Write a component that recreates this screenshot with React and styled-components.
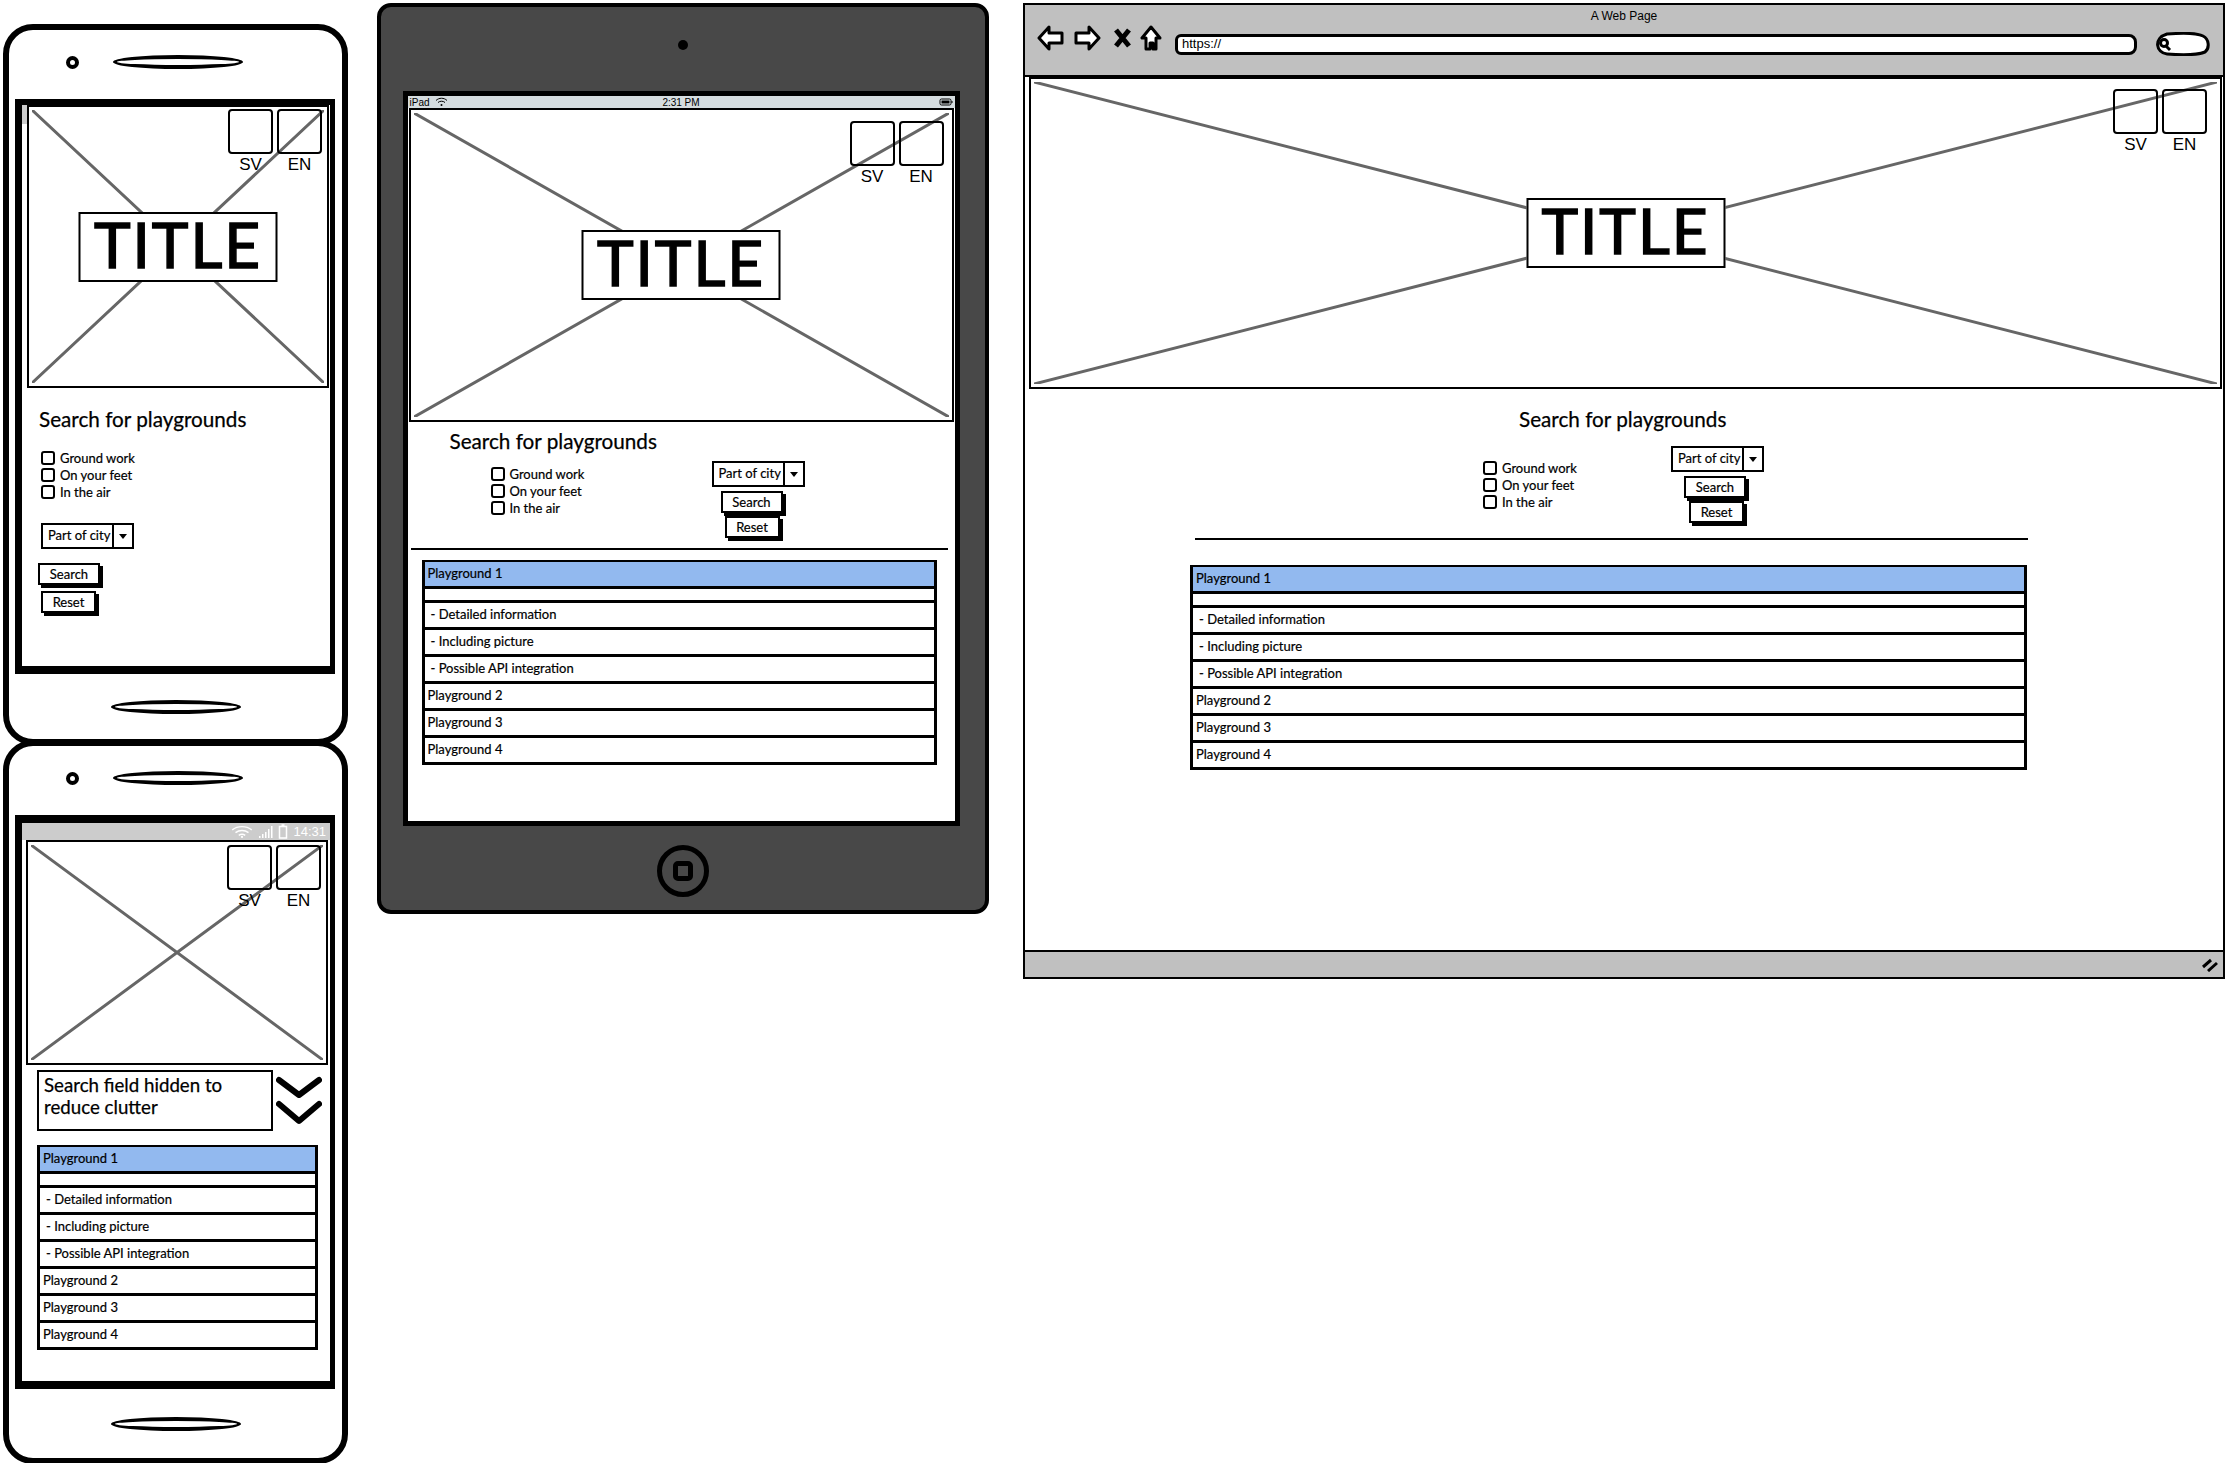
import React from 'react';
import styled, { createGlobalStyle } from 'styled-components';

const GlobalStyle = createGlobalStyle`
  html, body {
    margin: 0;
    padding: 0;
    background: #fff;
    color: #000;
    font-family: Lato, "Noto Sans", sans-serif;
  }
`;

const Page = styled.div`
  display: flex;
  align-items: flex-start;
  width: 2225px;
  height: 1463px;
  overflow: hidden;
`;

const PhoneColumn = styled.div`
  display: flex;
  flex-direction: column;
  width: 345px;
  margin: 24px 0 0 3px;
`;

const Phone = styled.div`
  display: flex;
  flex-direction: column;
  box-sizing: border-box;
  height: ${(p) => p.$height}px;
  margin-top: ${(p) => p.$top || 0}px;
  border: 6px solid #000;
  border-radius: 30px;
  background: #fff;
`;

const PhoneHead = styled.div`
  display: flex;
  align-items: center;
  gap: 34px;
  height: 69px;
  padding: 0 0 5px 57px;
  box-sizing: border-box;
`;

const Camera = styled.div`
  width: 5px;
  height: 5px;
  border: 4px solid #000;
  border-radius: 50%;
`;

const Speaker = styled.div`
  box-sizing: border-box;
  width: 130px;
  height: 14px;
  border: 4px solid #000;
  border-radius: 50%;
`;

const PhoneFoot = styled.div`
  flex: 1;
  display: flex;
  align-items: center;
  justify-content: center;
`;

const PhoneScreen = styled.div`
  box-sizing: border-box;
  width: 320px;
  height: ${(p) => p.$height}px;
  margin-left: 6px;
  border: solid #000;
  border-width: ${(p) => p.$top}px 5px 8px 7px;
  background: ${(p) => (p.$stub ? 'linear-gradient(#ccc, #ccc) no-repeat 0 0 / 5px 19px' : '#fff')};
`;

const AndroidBar = styled.div`
  display: flex;
  align-items: center;
  justify-content: flex-end;
  gap: 5px;
  height: 17px;
  padding-right: 4px;
  background: #ccc;
  color: #fff;
  font: 13px "Liberation Sans", Arial, sans-serif;
`;

const Tablet = styled.div`
  display: flex;
  flex-direction: column;
  align-items: center;
  flex: none;
  box-sizing: border-box;
  width: 612px;
  height: 911px;
  margin: 3px 0 0 29px;
  border: 4px solid #000;
  border-radius: 14px;
  background: #484848;
`;

const TabletHead = styled.div`
  display: flex;
  justify-content: center;
  align-items: center;
  box-sizing: border-box;
  height: 84px;
  padding-bottom: 8px;
`;

const TabletCamera = styled.div`
  width: 10px;
  height: 10px;
  border-radius: 50%;
  background: #000;
`;

const TabletScreen = styled.div`
  box-sizing: border-box;
  width: 557px;
  height: 735px;
  margin-right: 4px;
  border: 5px solid #000;
  background: #fff;
`;

const IpadBar = styled.div`
  display: grid;
  grid-template-columns: 1fr auto 1fr;
  align-items: center;
  height: 12px;
  padding: 0 2px;
  background: #d5dcdf;
  font: 10px "Liberation Sans", Arial, sans-serif;
`;

const IpadLeft = styled.div`
  display: flex;
  align-items: center;
  gap: 5px;
`;

const IpadRight = styled.div`
  display: flex;
  justify-content: flex-end;
`;

const TabletFoot = styled.div`
  flex: 1;
  display: flex;
  align-items: center;
  justify-content: center;
  padding-top: 6px;
`;

const HomeButton = styled.div`
  display: flex;
  align-items: center;
  justify-content: center;
  box-sizing: border-box;
  width: 52px;
  height: 52px;
  border: 5px solid #000;
  border-radius: 50%;
`;

const HomeSquare = styled.div`
  box-sizing: border-box;
  width: 20px;
  height: 20px;
  border: 5px solid #000;
  border-radius: 5px;
`;

const Browser = styled.div`
  display: flex;
  flex-direction: column;
  flex: none;
  box-sizing: border-box;
  width: 1202px;
  height: 976px;
  margin: 3px 0 0 34px;
  border: 2px solid #000;
  background: #fff;
`;

const BrowserBar = styled.div`
  height: 70px;
  border-bottom: 2px solid #000;
  background: #c0c0c0;
`;

const BrowserTitle = styled.div`
  padding-top: 3px;
  height: 16px;
  text-align: center;
  font: 12px/16px "Liberation Sans", Arial, sans-serif;
`;

const NavRow = styled.div`
  display: flex;
  align-items: center;
  height: 26px;
  margin-top: 7px;
  padding-left: 12px;
`;

const NavIcon = styled.svg`
  flex: none;
  margin-left: ${(p) => p.$gap || 0}px;
  margin-bottom: ${(p) => p.$lift || 0}px;
`;

const UrlBar = styled.div`
  box-sizing: border-box;
  width: 962px;
  height: 21px;
  margin-left: 13px;
  padding-left: 4px;
  border: 3px solid #000;
  border-radius: 6px 8px 8px 6px;
  background: #fff;
  font: 13px/13px "Liberation Sans", Arial, sans-serif;
`;

const BrowserContent = styled.div`
  flex: 1;
  padding-left: 4px;
`;

const BrowserFoot = styled.div`
  display: flex;
  align-items: center;
  justify-content: flex-end;
  height: 25px;
  padding-right: 5px;
  border-top: 2px solid #000;
  background: #c0c0c0;
`;

const Hero = styled.div`
  position: relative;
  box-sizing: border-box;
  width: ${(p) => p.$width}px;
  height: ${(p) => p.$height}px;
  margin-left: ${(p) => p.$left || 0}px;
  border: 2px solid #000;
`;

const Cross = styled.svg`
  position: absolute;
  top: 3px;
  left: 3px;
  width: calc(100% - 6px);
  height: calc(100% - 6px);
`;

const TitleBox = styled.div`
  position: absolute;
  top: 50%;
  left: 50%;
  transform: translate(-50%, -50%);
  box-sizing: border-box;
  width: 199px;
  height: 70px;
  border: 2px solid #000;
  background: #fff;
  text-align: center;
  font-size: 62px;
  line-height: 60px;
  letter-spacing: 2px;
  -webkit-text-stroke: 1.5px #000;
`;

const LangGroup = styled.div`
  position: absolute;
  top: ${(p) => p.$top}px;
  right: ${(p) => p.$right}px;
  display: flex;
  gap: 4px;
`;

const LangItem = styled.div`
  width: 45px;
  text-align: center;
  font: 17px/22px "Liberation Sans", Arial, sans-serif;
`;

const LangBox = styled.div`
  box-sizing: border-box;
  height: 45px;
  border: 2px solid #000;
  border-radius: 4px;
`;

const Heading = styled.div`
  height: 22px;
  margin: ${(p) => p.$top}px 0 0 ${(p) => p.$left}px;
  font-size: 20.7px;
  line-height: 22px;
  -webkit-text-stroke: 0.25px #000;
`;

const FormRow = styled.div`
  display: grid;
  grid-template-columns: ${(p) => p.$columns};
  row-gap: 24px;
  align-items: start;
  margin-top: ${(p) => p.$top}px;
  padding-left: ${(p) => p.$indent}px;
`;

const CheckGroup = styled.div`
  display: flex;
  flex-direction: column;
  gap: 3px;
  margin-top: ${(p) => p.$top || 0}px;
`;

const CheckRow = styled.label`
  display: flex;
  align-items: center;
  gap: 5px;
  height: 14px;
  font-size: 13px;
  -webkit-text-stroke: 0.2px #000;
`;

const CheckBox = styled.span`
  box-sizing: border-box;
  width: 14px;
  height: 14px;
  border: 2px solid #000;
  border-radius: 3px;
`;

const Controls = styled.div`
  display: flex;
  flex-direction: column;
  align-items: flex-start;
  gap: ${(p) => p.$gap}px;
`;

const SelectBox = styled.div`
  display: flex;
  box-sizing: border-box;
  width: 93px;
  height: 26px;
  margin-bottom: ${(p) => p.$after}px;
  border: 2px solid #000;
  font-size: 13px;
  line-height: 20px;
  -webkit-text-stroke: 0.2px #000;
`;

const SelectLabel = styled.div`
  flex: 1;
  padding-left: 5px;
  border-right: 2px solid #000;
`;

const SelectArrow = styled.div`
  align-self: center;
  width: 0;
  height: 0;
  margin: 0 5px;
  border: 4px solid transparent;
  border-top: 5px solid #000;
  border-bottom: 0;
`;

const Button = styled.div`
  box-sizing: border-box;
  width: ${(p) => p.$width}px;
  height: 22px;
  margin-left: ${(p) => p.$left}px;
  border: 2px solid #000;
  box-shadow: 3px 3px 0 #000;
  background: #fff;
  text-align: center;
  font-size: 13px;
  line-height: 18px;
  -webkit-text-stroke: 0.2px #000;
`;

const Divider = styled.div`
  width: ${(p) => p.$width}px;
  height: 2px;
  margin: ${(p) => p.$top}px 0 0 ${(p) => p.$left}px;
  background: #000;
`;

const List = styled.div`
  box-sizing: border-box;
  width: ${(p) => p.$width}px;
  margin: ${(p) => p.$top}px 0 0 ${(p) => p.$left}px;
  border: solid #000;
  border-width: 2px 3px 0;
`;

const Row = styled.div`
  box-sizing: border-box;
  height: ${(p) => (p.$blank ? 14 : 27)}px;
  padding-left: ${(p) => (p.$sub ? 6 : 3)}px;
  border-bottom: 3px solid #000;
  background: ${(p) => (p.$active ? '#92b9ef' : '#fff')};
  font-size: 13px;
  line-height: 23px;
  -webkit-text-stroke: 0.2px #000;
`;

const HiddenNote = styled.div`
  display: flex;
  gap: 3px;
  margin: 5px 0 0 15px;
`;

const NoteBox = styled.div`
  box-sizing: border-box;
  width: 236px;
  height: 61px;
  padding: 2px 5px;
  border: 2px solid #000;
  font-size: 18.7px;
  line-height: 22px;
  -webkit-text-stroke: 0.25px #000;
`;

const ChevronIcon = styled.svg`
  flex: none;
  margin-top: 6px;
`;

const rows = [
  { label: 'Playground 1', active: true },
  { blank: true },
  { label: '- Detailed information', sub: true },
  { label: '- Including picture', sub: true },
  { label: '- Possible API integration', sub: true },
  { label: 'Playground 2' },
  { label: 'Playground 3' },
  { label: 'Playground 4' },
];

const PlaceholderImage = ({ width, height, left, langTop, langRight, title }) => (
  <Hero $width={width} $height={height} $left={left}>
    <Cross viewBox="0 0 100 100" preserveAspectRatio="none">
      <path d="M0 0L100 100M100 0L0 100" stroke="#666" strokeWidth="3" fill="none" vectorEffect="non-scaling-stroke" />
    </Cross>
    {title && <TitleBox>TITLE</TitleBox>}
    <LangGroup $top={langTop} $right={langRight}>
      <LangItem><LangBox />SV</LangItem>
      <LangItem><LangBox />EN</LangItem>
    </LangGroup>
  </Hero>
);

const Checks = ({ top }) => (
  <CheckGroup $top={top}>
    <CheckRow><CheckBox />Ground work</CheckRow>
    <CheckRow><CheckBox />On your feet</CheckRow>
    <CheckRow><CheckBox />In the air</CheckRow>
  </CheckGroup>
);

const SearchControls = ({ gap, selectAfter, searchLeft, resetLeft }) => (
  <Controls $gap={gap}>
    <SelectBox $after={selectAfter}>
      <SelectLabel>Part of city</SelectLabel>
      <SelectArrow />
    </SelectBox>
    <Button $width={62} $left={searchLeft}>Search</Button>
    <Button $width={55} $left={resetLeft}>Reset</Button>
  </Controls>
);

const ResultList = ({ width, left, top }) => (
  <List $width={width} $left={left} $top={top}>
    {rows.map((row, i) => (
      <Row key={i} $active={row.active} $blank={row.blank} $sub={row.sub}>{row.label}</Row>
    ))}
  </List>
);

const AndroidStatus = () => (
  <AndroidBar>
    <svg width="22" height="13" viewBox="0 0 20 12" fill="none" stroke="#fff" strokeWidth="1.3">
      <path d="M1 4.500C6 .500 14 .500 19 4.500M4 7C7.500 4.500 12.500 4.500 16 7M7 9.500C8.800 8.300 11.200 8.300 13 9.500" />
      <circle cx="10" cy="11" r="1" fill="#fff" stroke="none" />
    </svg>
    <svg width="15" height="12" viewBox="0 0 15 12" fill="#fff">
      <path d="M1 10h1.500v2H1zM4 8h1.500v4H4zM7 6h1.500v6H7zM10 3h1.500v9H10zM13 0h1.500v12H13z" />
    </svg>
    <svg width="10" height="15" viewBox="0 0 10 15" fill="none" stroke="#fff" strokeWidth="1.500">
      <path d="M3.500 1h3M1.500 2.500h7V14h-7z" />
    </svg>
    <span>14:31</span>
  </AndroidBar>
);

const Chevrons = () => (
  <ChevronIcon width="46" height="50" viewBox="0 0 46 50" fill="none" stroke="#000" strokeWidth="6" strokeLinecap="round" strokeLinejoin="round">
    <path d="M3 4L23 19L43 4M3 28L23 45L43 28" />
  </ChevronIcon>
);

const App = () => (
  <Page>
    <GlobalStyle />
    <PhoneColumn>
      <Phone $height={721}>
        <PhoneHead><Camera /><Speaker /></PhoneHead>
        <PhoneScreen $height={575} $top={6} $stub>
          <PlaceholderImage width={302} height={283} left={5} langTop={2} langRight={5} title />
          <Heading $top={20} $left={17}>Search for playgrounds</Heading>
          <FormRow $columns="auto" $top={21} $indent={19}>
            <Checks />
            <SearchControls gap={6} selectAfter={8} searchLeft={-3} resetLeft={0} />
          </FormRow>
        </PhoneScreen>
        <PhoneFoot><Speaker /></PhoneFoot>
      </Phone>
      <Phone $height={724} $top={-5}>
        <PhoneHead><Camera /><Speaker /></PhoneHead>
        <PhoneScreen $height={574} $top={8}>
          <AndroidStatus />
          <PlaceholderImage width={302} height={225} left={4} langTop={3} langRight={5} />
          <HiddenNote>
            <NoteBox>Search field hidden to reduce clutter</NoteBox>
            <Chevrons />
          </HiddenNote>
          <ResultList width={281} left={15} top={14} />
        </PhoneScreen>
        <PhoneFoot><Speaker /></PhoneFoot>
      </Phone>
    </PhoneColumn>

    <Tablet>
      <TabletHead><TabletCamera /></TabletHead>
      <TabletScreen>
        <IpadBar>
          <IpadLeft>
            iPad
            <svg width="13" height="10" viewBox="0 0 13 10" fill="none" stroke="#000" strokeWidth="1">
              <path d="M1 3.500C4 .500 9 .500 12 3.500M3 5.500C5 3.800 8 3.800 10 5.500" />
              <circle cx="6.500" cy="8" r="1" fill="#000" stroke="none" />
            </svg>
          </IpadLeft>
          <span>2:31 PM</span>
          <IpadRight>
            <svg width="14" height="8" viewBox="0 0 14 8" fill="none" stroke="#000">
              <rect x="1" y="1" width="11" height="6" rx="1.500" />
              <rect x="3" y="3" width="7" height="2" fill="#000" />
              <path d="M13 3v2" />
            </svg>
          </IpadRight>
        </IpadBar>
        <PlaceholderImage width={545} height={314} left={1} langTop={11} langRight={8} title />
        <Heading $top={8} $left={42}>Search for playgrounds</Heading>
        <FormRow $columns="221px auto" $top={9} $indent={83}>
          <Checks top={6} />
          <SearchControls gap={3} selectAfter={1} searchLeft={9} resetLeft={13} />
        </FormRow>
        <Divider $width={537} $left={3} $top={10} />
        <ResultList width={515} left={14} top={10} />
      </TabletScreen>
      <TabletFoot><HomeButton><HomeSquare /></HomeButton></TabletFoot>
    </Tablet>

    <Browser>
      <BrowserBar>
        <BrowserTitle>A Web Page</BrowserTitle>
        <NavRow>
          <NavIcon $lift={12} width="27" height="26" viewBox="0 0 27 26" fill="#fff" stroke="#000" strokeWidth="3" strokeLinejoin="round">
            <path d="M2 13L12 2V8H25V18H12V24Z" />
          </NavIcon>
          <NavIcon $lift={12} $gap={10} width="27" height="26" viewBox="0 0 27 26" fill="#fff" stroke="#000" strokeWidth="3" strokeLinejoin="round">
            <path d="M25 13L15 2V8H2V18H15V24Z" />
          </NavIcon>
          <NavIcon $lift={12} $gap={13} width="17" height="20" viewBox="0 0 17 20" fill="none" stroke="#000" strokeWidth="5">
            <path d="M2 2L15 18M15 2L2 18" />
          </NavIcon>
          <NavIcon $lift={12} $gap={9} width="22" height="26" viewBox="0 0 22 26" fill="#fff" stroke="#000" strokeWidth="3" strokeLinejoin="round">
            <path d="M11 2L2 13H6V24H10V18H13V24H16V13H20Z" />
          </NavIcon>
          <UrlBar>https://</UrlBar>
          <NavIcon $gap={16} width="58" height="24" viewBox="0 0 58 24" fill="#fff" stroke="#000" strokeWidth="3">
            <path d="M14 2C28 1 44 1 50 4C56 7 57 16 52 20C44 23 26 23 14 22C3 21 0 6 14 2Z" />
            <circle cx="11" cy="11" r="3.500" fill="none" />
            <path d="M13 14L17 18" />
          </NavIcon>
        </NavRow>
      </BrowserBar>
      <BrowserContent>
        <PlaceholderImage width={1193} height={312} langTop={10} langRight={13} title />
        <Heading $top={19} $left={490}>Search for playgrounds</Heading>
        <FormRow $columns="188px auto" $top={16} $indent={454}>
          <Checks top={15} />
          <SearchControls gap={3} selectAfter={1} searchLeft={13} resetLeft={18} />
        </FormRow>
        <Divider $width={833} $left={166} $top={15} />
        <ResultList width={837} left={161} top={25} />
      </BrowserContent>
      <BrowserFoot>
        <svg width="16" height="14" viewBox="0 0 16 14" fill="none" stroke="#000" strokeWidth="3">
          <path d="M1 9L9 2M6 13L15 5" />
        </svg>
      </BrowserFoot>
    </Browser>
  </Page>
);

export default App;
